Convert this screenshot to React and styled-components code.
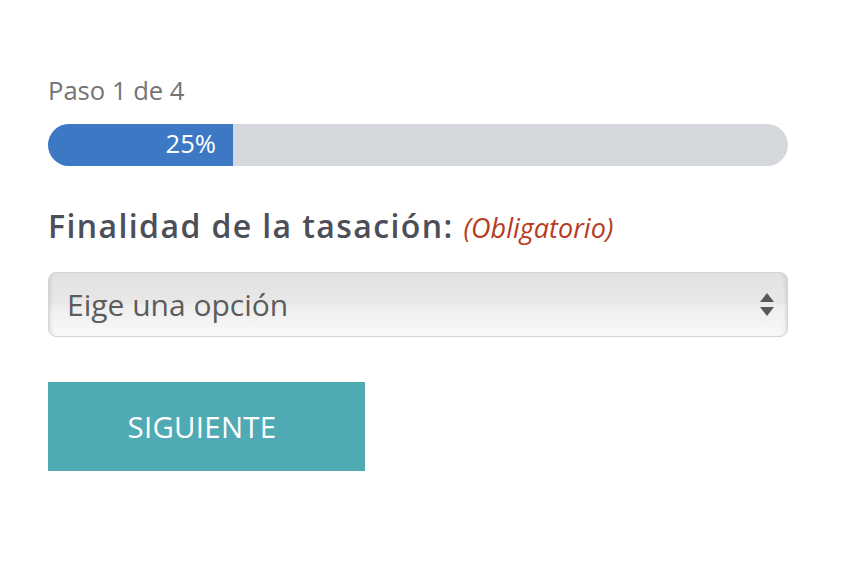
import React from 'react'
import styled, { createGlobalStyle } from 'styled-components'

const GlobalStyle = createGlobalStyle`
  body {
    margin: 0;
    background: #ffffff;
    font-family: "Open Sans", "Liberation Sans", sans-serif;
  }
`

export default function App() {
  const step = 1
  const total = 4
  const percent = Math.round((step / total) * 100)

  return (
    <>
      <GlobalStyle />
      <FormStyled>
        <StepLabel>Paso {step} de {total}</StepLabel>

        <ProgressTrack>
          <ProgressFill style={{ width: `${percent}%` }}>{percent}%</ProgressFill>
        </ProgressTrack>

        <FieldLabel>
          Finalidad de la tasación: <Required>(Obligatorio)</Required>
        </FieldLabel>

        <SelectBox role="combobox" aria-expanded="false">
          <span>Eige una opción</span>
          <svg width="16" height="26" viewBox="0 0 16 26" aria-hidden="true">
            <polygon points="8,1 15,10 1,10" fill="#585858" />
            <polygon points="1,15 15,15 8,24" fill="#585858" />
          </svg>
        </SelectBox>

        <NextButton type="button">SIGUIENTE</NextButton>
      </FormStyled>
    </>
  )
}

const FormStyled = styled.div`
  display: flex;
  flex-direction: column;
  align-items: flex-start;
  width: 740px;
  padding: 73px 0 0 48px;
`

const StepLabel = styled.div`
  font-size: 25.6px;
  line-height: 35px;
  color: #747474;
`

const ProgressTrack = styled.div`
  margin-top: 16px;
  width: 100%;
  height: 42px;
  border-radius: 21px;
  background: #d4d7dc;
  overflow: hidden;
  display: flex;
`

const ProgressFill = styled.div`
  height: 100%;
  background: #3c78c3;
  color: #ffffff;
  font-size: 25.6px;
  line-height: 40px;
  text-align: right;
  padding-right: 17px;
  box-sizing: border-box;
`

const FieldLabel = styled.h2`
  margin: 38px 0 0;
  font-size: 32px;
  line-height: 44px;
  font-weight: 600;
  letter-spacing: 1.4px;
  color: #4c4e58;
`

const Required = styled.em`
  font-size: 27px;
  font-weight: 400;
  letter-spacing: 0;
  color: #b83a20;
`

const SelectBox = styled.div`
  margin-top: 22px;
  width: 100%;
  height: 65px;
  box-sizing: border-box;
  display: flex;
  align-items: center;
  justify-content: space-between;
  padding: 0 12px 0 18px;
  border: 1px solid #d5d5d5;
  border-radius: 8px;
  background: linear-gradient(#e2e2e2 0%, #e8e8e8 48%, #eeeeee 52%, #f9f9f9 100%);
  box-shadow: inset 4px 0 4px -3px rgba(0, 0, 0, 0.12),
    inset -4px 0 4px -3px rgba(0, 0, 0, 0.12);
  font-size: 30px;
  color: #5c5c5c;
`

const NextButton = styled.button`
  margin-top: 45px;
  width: 317px;
  height: 89px;
  padding: 0 9px 0 0;
  border: none;
  background: #4faab3;
  color: #ffffff;
  font-family: "Open Sans", "Liberation Sans", sans-serif;
  font-size: 29.4px;
  letter-spacing: 0.3px;
  cursor: pointer;
`
